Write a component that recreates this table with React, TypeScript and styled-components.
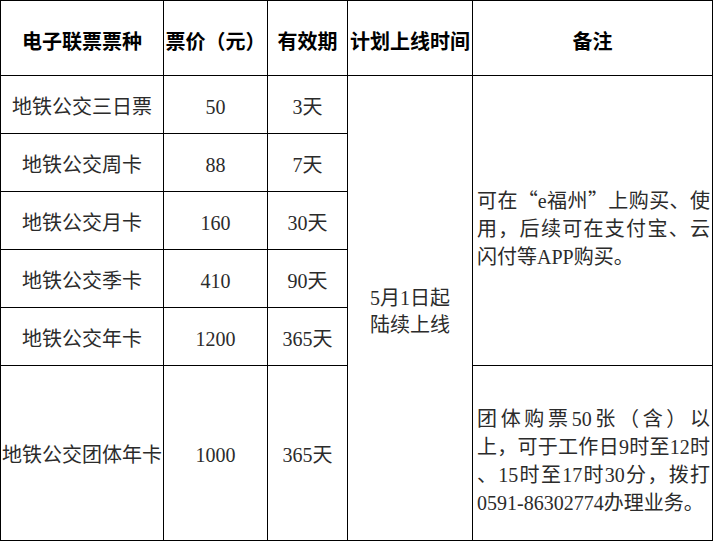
import { createGlobalStyle, styled } from 'styled-components';

const GlobalStyle = createGlobalStyle`
  html, body {
    margin: 0;
    padding: 0;
    background: #fff;
  }
`;

const tickets = [
  { name: '地铁公交三日票', price: '50', days: '3天' },
  { name: '地铁公交周卡', price: '88', days: '7天' },
  { name: '地铁公交月卡', price: '160', days: '30天' },
  { name: '地铁公交季卡', price: '410', days: '90天' },
  { name: '地铁公交年卡', price: '1200', days: '365天' },
];

const colWidths = [163, 104, 80, 125, 240];

const App = () => {
  return (
    <>
      <GlobalStyle />
      <Table lang="zh-CN">
        <colgroup>
          {colWidths.map((w, i) => (
            <Col key={i} $w={w} />
          ))}
        </colgroup>
        <thead>
          <Row $h={75}>
            <HeadCell>电子联票票种</HeadCell>
            <HeadCell>票价（元）</HeadCell>
            <HeadCell>有效期</HeadCell>
            <HeadCell>计划上线时间</HeadCell>
            <HeadCell>备注</HeadCell>
          </Row>
        </thead>
        <tbody>
          {tickets.map((t, i) => (
            <Row key={t.name} $h={58}>
              <Cell>{t.name}</Cell>
              <Cell>{t.price}</Cell>
              <Cell>{t.days}</Cell>
              {i === 0 && (
                <>
                  <LaunchCell rowSpan={6}>
                    5月1日起
                    <br />
                    陆续上线
                  </LaunchCell>
                  <RemarkCell rowSpan={5} $shift={16}>
                    <RemarkLine $justify>
                      可在<Wide>“</Wide>e福州<Wide>”</Wide>上购买、使
                    </RemarkLine>
                    <RemarkLine $justify>用，后续可在支付宝、云</RemarkLine>
                    <RemarkLine>闪付等APP购买。</RemarkLine>
                  </RemarkCell>
                </>
              )}
            </Row>
          ))}
          <Row $h={175}>
            <Cell>地铁公交团体年卡</Cell>
            <Cell>1000</Cell>
            <Cell>365天</Cell>
            <RemarkCell $shift={16}>
              <RemarkLine $justify>团体购票50张（含）以</RemarkLine>
              <RemarkLine $justify>上，可于工作日9时至12时</RemarkLine>
              <RemarkLine $justify>、15时至17时30分，拨打</RemarkLine>
              <RemarkLine>0591-86302774办理业务。</RemarkLine>
            </RemarkCell>
          </Row>
        </tbody>
      </Table>
    </>
  );
};

const Table = styled.table`
  width: 712px;
  table-layout: fixed;
  border-collapse: collapse;
  font-family: 'Liberation Serif', 'Noto Sans CJK SC', serif;
  font-size: 20px;
  color: #2b2b2b;
`;

const Col = styled.col<{ $w: number }>`
  width: ${(p) => p.$w}px;
`;

const Row = styled.tr<{ $h: number }>`
  height: ${(p) => p.$h}px;
`;

const HeadCell = styled.th`
  padding: 4px 0 0;
  border: 1px solid #000;
  font-family: 'Noto Sans CJK SC', sans-serif;
  font-weight: 700;
  color: #000;
  text-align: center;
  vertical-align: middle;
  white-space: nowrap;
`;

const Cell = styled.td`
  padding: 4px 0 0;
  border: 1px solid #000;
  text-align: center;
  vertical-align: middle;
  white-space: nowrap;
  line-height: 28px;
`;

const LaunchCell = styled(Cell)`
  line-height: 27px;
  padding-top: 8px;
`;

const RemarkCell = styled.td<{ $shift?: number }>`
  padding: ${(p) => p.$shift ?? 0}px 2px 0 4px;
  border: 1px solid #000;
  text-align: left;
  vertical-align: middle;
  line-height: 28px;
`;

const RemarkLine = styled.div<{ $justify?: boolean }>`
  text-align: ${(p) => (p.$justify ? 'justify' : 'left')};
  text-align-last: ${(p) => (p.$justify ? 'justify' : 'auto')};
`;

const Wide = styled.span`
  font-family: 'Noto Sans CJK SC', sans-serif;
`;

export default App;
